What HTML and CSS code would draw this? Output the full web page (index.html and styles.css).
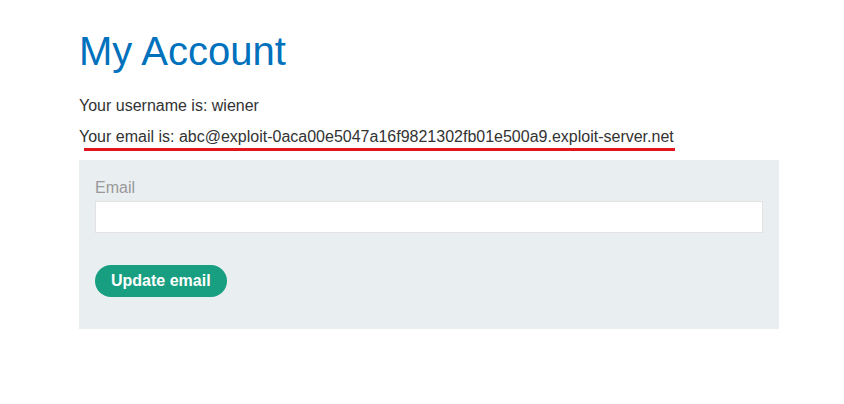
FILE: index.html
```html
<!DOCTYPE html>
<html>
<head>
<meta charset="utf-8">
<link rel="stylesheet" href="styles.css">
</head>
<body>
<main class="container">
  <h1 class="title">My Account</h1>
  <p class="info">Your username is: wiener</p>
  <p class="info info-last">Your email is: abc@exploit-0aca00e5047a16f9821302fb01e500a9.exploit-server.net</p>
  <div class="mark"></div>
  <form class="panel">
    <label class="label" for="email">Email</label>
    <input class="field" id="email" type="email">
    <button class="btn" type="button">Update email</button>
  </form>
</main>
</body>
</html>
```
FILE: styles.css
```css
html, body {
  margin: 0;
  padding: 0;
  background: #ffffff;
}
body {
  font-family: "Liberation Sans", Arial, sans-serif;
  color: #333333;
}
.container {
  width: 700px;
  margin-left: 79px;
  padding-top: 27px;
}
.title {
  margin: 0 0 21px 0;
  font-size: 40px;
  line-height: 48px;
  font-weight: normal;
  color: #0071bc;
}
.info {
  margin: 0 0 11px 0;
  font-size: 16px;
  line-height: 20px;
}
.info-last {
  margin-bottom: 0;
}
.mark {
  margin: 1px 0 9px 5px;
  width: 591px;
  height: 3px;
  background: #e3151c;
}
.panel {
  display: flex;
  flex-direction: column;
  align-items: flex-start;
  background: #e9eef1;
  padding: 18px 16px 32px 16px;
  margin: 0;
}
.label {
  font-size: 16px;
  line-height: 20px;
  color: #999999;
  margin-bottom: 3px;
}
.field {
  box-sizing: border-box;
  width: 100%;
  height: 32px;
  margin: 0 0 32px 0;
  border: 1px solid #e2e2e2;
  background: #ffffff;
  font-family: inherit;
  font-size: 16px;
  padding: 0 8px;
  outline: none;
}
.btn {
  height: 32px;
  padding: 0 16px;
  border: none;
  border-radius: 16px;
  background: #189e80;
  color: #ffffff;
  font-family: "Liberation Sans", Arial, sans-serif;
  font-weight: bold;
  font-size: 16px;
  line-height: 32px;
  cursor: pointer;
}
```
